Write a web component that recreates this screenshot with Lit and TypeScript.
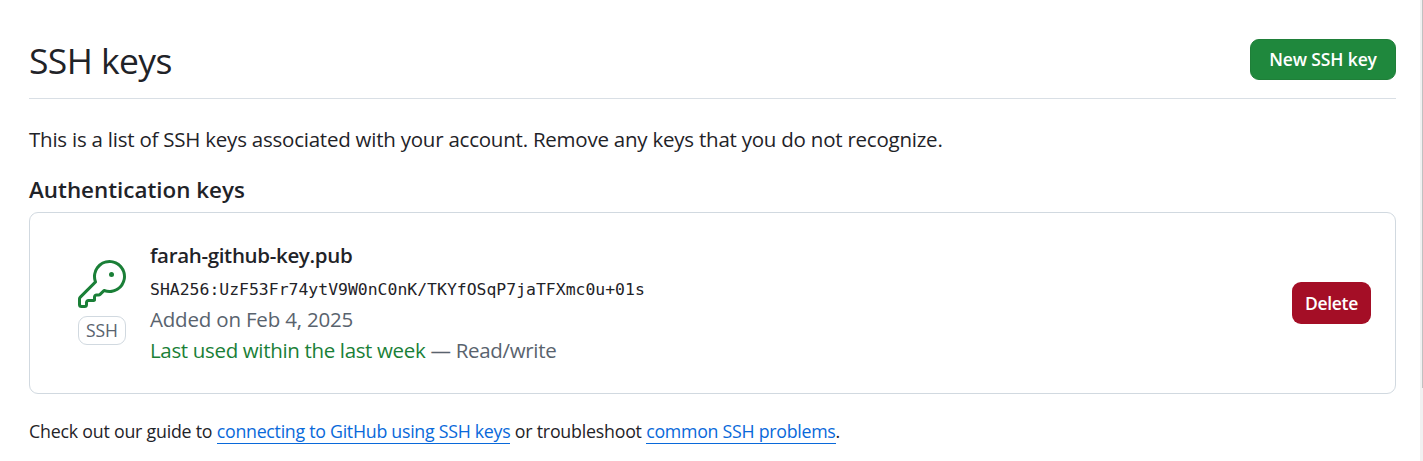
import { LitElement, html, css } from "lit";
import { customElement, property } from "lit/decorators.js";

@customElement("key-card")
class KeyCard extends LitElement {
  @property() name = "";
  @property() fingerprint = "";
  @property() added = "";
  @property() lastUsed = "";
  @property() access = "";

  static styles = css`
    :host { display: block; }
    .card {
      box-sizing: border-box;
      height: 182px;
      display: flex;
      align-items: center;
      border: 1px solid #d1d9e0;
      border-radius: 9px;
      padding: 0 24px 0 48px;
    }
    .kind { width: 48px; margin-bottom: 2px; display: flex; flex-direction: column; align-items: center; gap: 8px; }
    .kind svg { display: block; fill: #1a7f37; }
    .label {
      box-sizing: border-box;
      width: 48px;
      height: 29px;
      border: 1px solid #d1d9e0;
      border-radius: 9px;
      text-align: center;
      font-size: 17.5px;
      line-height: 27px;
      letter-spacing: -0.1px;
      color: #59636e;
    }
    .details { flex: 1; margin: 0 0 3px 24px; display: flex; flex-direction: column; font-size: 20.5px; color: #59636e; white-space: nowrap; }
    .name { font-weight: 600; color: #1f2328; line-height: 34px; padding-bottom: 2px; letter-spacing: -0.33px; }
    .hash { font-family: "DejaVu Sans Mono", monospace; font-size: 16.45px; line-height: 31px; margin-bottom: -1px; color: #1f2328; }
    .line { line-height: 31px; }
    .date { letter-spacing: -0.19px; }
    .usage { letter-spacing: -0.31px; }
    .used { color: #1a7f37; letter-spacing: -0.34px; }
    .delete {
      font: inherit;
      font-weight: 600;
      font-size: 17.5px;
      letter-spacing: -0.3px;
      width: 79px;
      height: 42px;
      padding: 0 0 1px;
      border: 0;
      border-radius: 9px;
      background: #a40e26;
      color: #fff;
    }
  `;

  render() {
    return html`
      <div class="card">
        <div class="kind">
          <svg width="48" height="48" viewBox="0 0 24 24" aria-hidden="true">
            <path d="M16.75 8.5a1.25 1.25 0 1 0 0-2.5 1.25 1.25 0 0 0 0 2.5Z"></path>
            <path d="M15.75 0a8.25 8.25 0 1 1-2.541 16.101l-1.636 1.636a1.744 1.744 0 0 1-1.237.513H9.25a.25.25 0 0 0-.25.25v1.448a.876.876 0 0 1-.256.619l-.214.213a.75.75 0 0 1-.545.22H5.25a.25.25 0 0 0-.25.25v1A1.75 1.75 0 0 1 3.25 24h-1.5A1.75 1.75 0 0 1 0 22.25v-2.836c0-.464.185-.908.513-1.236l7.386-7.388A8.249 8.249 0 0 1 15.75 0ZM9 8.25a6.733 6.733 0 0 0 .463 2.462.75.75 0 0 1-.168.804l-7.722 7.721a.25.25 0 0 0-.073.177v2.836c0 .138.112.25.25.25h1.5a.25.25 0 0 0 .25-.25v-1c0-.966.784-1.75 1.75-1.75H7.5v-1c0-.966.784-1.75 1.75-1.75h1.086a.25.25 0 0 0 .177-.073l1.971-1.972a.75.75 0 0 1 .804-.168A6.75 6.75 0 1 0 9 8.25Z"></path>
          </svg>
          <span class="label">SSH</span>
        </div>
        <div class="details">
          <span class="name"><span>${this.name}</span></span>
          <span class="hash">${this.fingerprint}</span>
          <span class="line date">${this.added}</span>
          <span class="line usage"><span class="used">${this.lastUsed}</span> — ${this.access}</span>
        </div>
        <button class="delete">Delete</button>
      </div>
    `;
  }
}

@customElement("app-root")
class AppRoot extends LitElement {
  static styles = css`
    :host {
      display: flex;
      height: 461px;
      overflow: hidden;
      background: #fff;
      color: #1f2328;
      font-family: "Open Sans", "Noto Sans", sans-serif;
    }
    .page { flex: 1; padding: 27px 24px 0 29px; white-space: nowrap; }
    .head {
      box-sizing: border-box;
      height: 72px;
      display: flex;
      justify-content: space-between;
      align-items: flex-start;
      border-bottom: 1px solid #d9dfe5;
    }
    h1 { margin: 6px 0 0; font-size: 35.5px; line-height: 54px; font-weight: 400; letter-spacing: -0.6px; }
    .new {
      box-sizing: border-box;
      margin-top: 12px;
      width: 146px;
      height: 41px;
      padding: 0 0 1px;
      border: 1px solid #1f7f39;
      border-radius: 9px;
      background: #1f883d;
      color: #fff;
      font: inherit;
      font-weight: 600;
      font-size: 17.5px;
      letter-spacing: -0.12px;
    }
    .intro { margin: 24px 0 0; font-size: 20.5px; line-height: 32px; letter-spacing: -0.23px; }
    h2 { margin: 19px 0 6px; font-size: 22.4px; line-height: 32px; font-weight: 600; }
    .help { margin: 24px 0 0; font-size: 17.8px; line-height: 27px; letter-spacing: -0.22px; }
    a { color: #0969da; text-decoration: none; border-bottom: 1px solid #0969da; letter-spacing: -0.28px; }
    .scroll { width: 3px; background: #f1f1f1; display: flex; justify-content: flex-end; }
    .thumb { width: 1px; height: 388px; background: #c1c1c1; }
  `;

  render() {
    return html`
      <main class="page">
        <header class="head">
          <h1>SSH keys</h1>
          <button class="new">New SSH key</button>
        </header>
        <p class="intro">This is a list of SSH keys associated with your account. Remove any keys that you do not recognize.</p>
        <h2>Authentication keys</h2>
        <key-card
          .name=${"farah-github-key.pub"}
          .fingerprint=${"SHA256:UzF53Fr74ytV9W0nC0nK/TKYfOSqP7jaTFXmc0u+01s"}
          .added=${"Added on Feb 4, 2025"}
          .lastUsed=${"Last used within the last week"}
          .access=${"Read/write"}
        ></key-card>
        <p class="help">Check out our guide to <a>connecting to GitHub using SSH keys</a> or troubleshoot <a>common SSH problems</a>.</p>
      </main>
      <div class="scroll"><div class="thumb"></div></div>
    `;
  }
}
